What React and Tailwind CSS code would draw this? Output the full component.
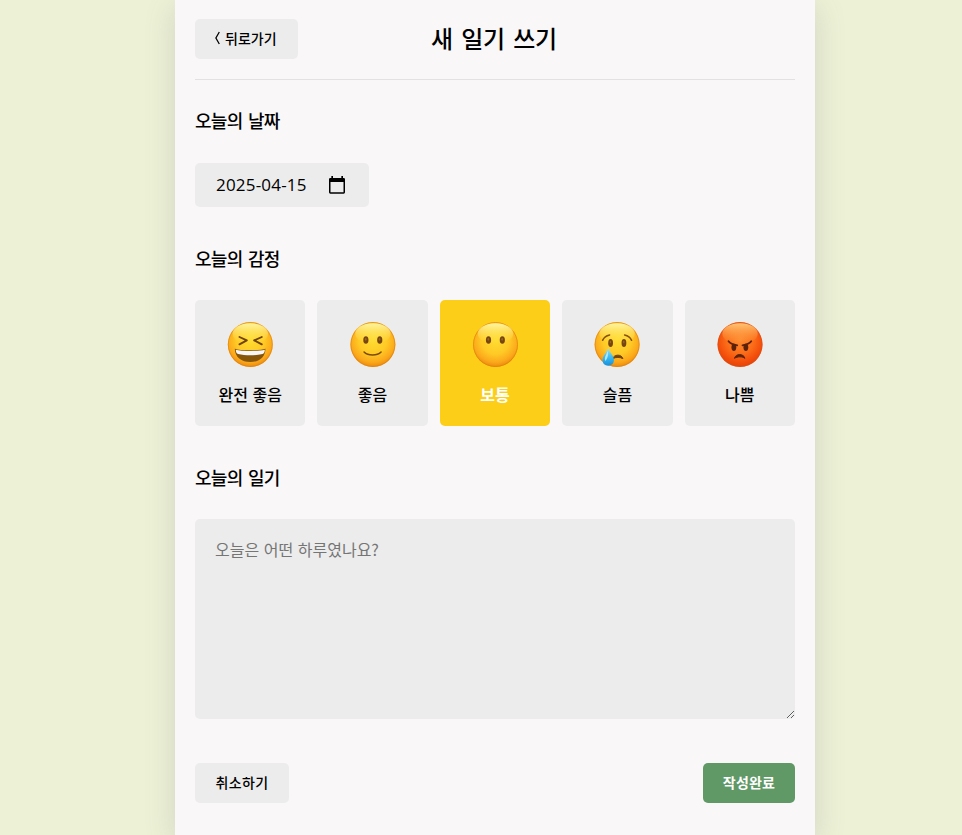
import React from "react";

const viewBoxes = {
  laugh: "21.6 21 138 138",
  smile: "22.8 21 138 138",
  blank: "21 21 138 138",
  sad: "22.2 21 138 138",
  angry: "20.4 21 138 138",
};

function Face({ kind }) {
  const angry = kind === "angry";
  const id = `face-${kind}`;
  const cx = angry ? 89.5 : 91.5;
  return (
    <svg viewBox={viewBoxes[kind]} className="block h-[46px] w-[46px] overflow-visible" aria-hidden="true">
      <defs>
        <radialGradient id={id} cx="50%" cy="40%" r="62%">
          <stop offset="0" stopColor={angry ? "#fd8a30" : "#ffdc30"} />
          <stop offset="0.5" stopColor={angry ? "#fb6c18" : "#ffca26"} />
          <stop offset="0.8" stopColor={angry ? "#f24c0a" : "#fba81a"} />
          <stop offset="1" stopColor={angry ? "#e04008" : "#e8820c"} />
        </radialGradient>
        <linearGradient id={`${id}-shine`} x1="0" y1="0" x2="0" y2="1">
          <stop offset="0" stopColor={angry ? "#ffd080" : "#fffbb0"} stopOpacity="0.9" />
          <stop offset="1" stopColor={angry ? "#ff9c3c" : "#ffe44a"} stopOpacity="0" />
        </linearGradient>
        <linearGradient id="tear" x1="0" y1="0" x2="0" y2="1">
          <stop offset="0" stopColor="#a5e6f8" />
          <stop offset="0.5" stopColor="#3dbcf4" />
          <stop offset="1" stopColor="#1590dc" />
        </linearGradient>
      </defs>
      <circle cx={cx} cy="88.5" r="67.5" fill={`url(#${id})`} />
      <circle cx={cx} cy="88.5" r="66" fill="none" stroke={angry ? "#dc5018" : "#dc800c"} strokeWidth="3" strokeOpacity="0.6" />
      <ellipse cx={cx} cy="56" rx="53" ry="31" fill={`url(#${id}-shine)`} />
      {kind === "laugh" && (
        <>
          <path d="M59 66 L81 76 L59 88 M126 66 L103 76 L126 88" fill="none" stroke="#70430b" strokeWidth="5.5" strokeLinecap="round" strokeLinejoin="round" />
          <path d="M45 101 C60 107 123 107 137 101 C137 126 118 141 91.5 141 C65 141 45 126 45 101Z" fill="#875509" />
          <path d="M48 104 C65 109 118 109 135 104 C135 111 133 115 128 117 C106 122 77 122 55 117 C50 115 48 111 48 104Z" fill="#f6f6f8" />
        </>
      )}
      {(kind === "smile" || kind === "blank") && (
        <g fill="#774610">
          <ellipse cx="70.5" cy="75" rx="7.8" ry="11.5" />
          <ellipse cx="112" cy="75" rx="7.8" ry="11.5" />
          <ellipse cx="70" cy="73" rx="2.5" ry="4" fill="#9b6420" />
          <ellipse cx="111.5" cy="73" rx="2.5" ry="4" fill="#9b6420" />
        </g>
      )}
      {kind === "smile" && (
        <path d="M65 111 C77 123 104 123 116 111" fill="none" stroke="#7c4b08" strokeWidth="4.5" strokeLinecap="round" />
      )}
      {kind === "sad" && (
        <>
          <g fill="#774610">
            <ellipse cx="72" cy="84" rx="7.2" ry="12" />
            <ellipse cx="112" cy="84" rx="7.2" ry="12" />
            <ellipse cx="71.5" cy="81" rx="2.2" ry="4" fill="#9b6420" />
            <ellipse cx="111.5" cy="81" rx="2.2" ry="4" fill="#9b6420" />
          </g>
          <path d="M48 76 C52 67 59 62 69 60 M114 60 C124 62 131 67 135 76" fill="none" stroke="#875009" strokeWidth="4.5" strokeLinecap="round" />
          <path d="M78 131 C82 118 104 116 109 131 C100 126 88 126 78 131Z" fill="#714311" stroke="#714311" strokeWidth="3" strokeLinejoin="round" />
          <path d="M65 98 C61 113 48 122 48 135 C48 146 55 152 64.500 152 C74 152 82 146 82 135 C82 122 69 113 65 98Z" fill="url(#tear)" />
          <path d="M63 108 C59 121 52 128 56 138 C62 133 66 121 63 108Z" fill="#d3f7ff" fillOpacity="0.75" />
        </>
      )}
      {angry && (
        <>
          <g fill="#5b2208">
            <ellipse cx="71" cy="97" rx="7.2" ry="11" />
            <ellipse cx="107" cy="97" rx="7.2" ry="11" />
          </g>
          <path d="M55 79 C60 86 69 89 81 91 M123 79 C118 86 109 89 97 91" fill="none" stroke="#5b2208" strokeWidth="5.5" strokeLinecap="round" />
          <path d="M73 130 C76 115 101 115 104 130 C97 124 81 124 73 130Z" fill="#5b2208" stroke="#5b2208" strokeWidth="3" strokeLinejoin="round" />
        </>
      )}
    </svg>
  );
}

const emotions = [
  { kind: "laugh", label: "완전 좋음" },
  { kind: "smile", label: "좋음" },
  { kind: "blank", label: "보통", selected: true },
  { kind: "sad", label: "슬픔" },
  { kind: "angry", label: "나쁨" },
];

function Heading({ children }) {
  return <h2 className="h-7 text-[18px] leading-[26px] font-medium tracking-[-0.7px] [word-spacing:2px]">{children}</h2>;
}

export default function App() {
  return (
    <div className="flex h-[835px] justify-center overflow-hidden bg-[#edf1d6] pl-7 font-['Noto_Sans_CJK_KR',sans-serif] text-black">
      <main className="w-[640px] shrink-0 bg-[#f9f7f8] px-5 shadow-[0_7px_29px_0_rgba(100,100,111,0.2)]">
        <header className="grid h-20 grid-cols-[150px_1fr_150px] items-center border-b border-[#e2e2e2] pb-0.5">
          <button className="flex h-10 w-[103px] items-center rounded-[5px] bg-[#ececec] pb-px pl-5 text-sm font-medium whitespace-nowrap">
            <svg viewBox="0 0 5 14" className="mr-[5px] h-3.5 w-[5px]" fill="none" stroke="currentColor" strokeWidth="1.3">
              <path d="M4.3 1 L0.9 7 L4.3 13" />
            </svg>
            <span className="-mt-px">뒤로가기</span>
          </button>
          <h1 className="pr-0.5 pb-0.5 text-center text-2xl font-medium tracking-[-0.2px] whitespace-nowrap [word-spacing:3px]">새 일기 쓰기</h1>
        </header>

        <section className="pt-[27px]">
          <Heading>오늘의 날짜</Heading>
          <div className="mt-7 flex h-11 w-[174px] items-center rounded-[5px] bg-[#ececec] pl-[21px]">
            <span className="w-[113px] font-['Open_Sans',sans-serif] text-[17px] tracking-[0.2px]">2025-04-15</span>
            <svg viewBox="0 0 48 54" className="h-[18px] w-4">
              <path fillRule="evenodd" d="M7 0h5v6h25V0h5v6h2q4 0 4 4v39q0 4-4 4H4q-4 0-4-4V10q0-4 4-4h3zM4.5 18v30.5h39V18z" />
            </svg>
          </div>
        </section>

        <section className="pt-[38px]">
          <Heading>오늘의 감정</Heading>
          <div className="mt-[27px] grid grid-cols-5 gap-3">
            {emotions.map(({ kind, label, selected }) => (
              <button
                key={kind}
                className={`flex h-[126px] flex-col items-center rounded-[5px] pt-[22px] ${selected ? "bg-[#fdce17] font-bold text-white" : "bg-[#ececec] font-medium"}`}
              >
                <Face kind={kind} />
                <span className="mt-3.5 text-base leading-6 whitespace-nowrap [word-spacing:1px]">{label}</span>
              </button>
            ))}
          </div>
        </section>

        <section className="pt-[38px]">
          <Heading>오늘의 일기</Heading>
          <textarea
            placeholder="오늘은 어떤 하루였나요?"
            className="mt-[27px] block h-[200px] w-full resize rounded-[5px] bg-[#ececec] px-5 pt-[18px] text-base leading-6 outline-none [word-spacing:1px] placeholder:text-[#757575]"
          />
        </section>

        <footer className="flex justify-between pt-11">
          <button className="h-10 w-[94px] rounded-[5px] bg-[#ececec] pb-0.5 text-sm font-medium tracking-[0.4px]">취소하기</button>
          <button className="h-10 w-[92px] rounded-[5px] bg-[#609966] pb-0.5 text-sm font-bold tracking-[0.2px] text-white">작성완료</button>
        </footer>
      </main>
    </div>
  );
}
